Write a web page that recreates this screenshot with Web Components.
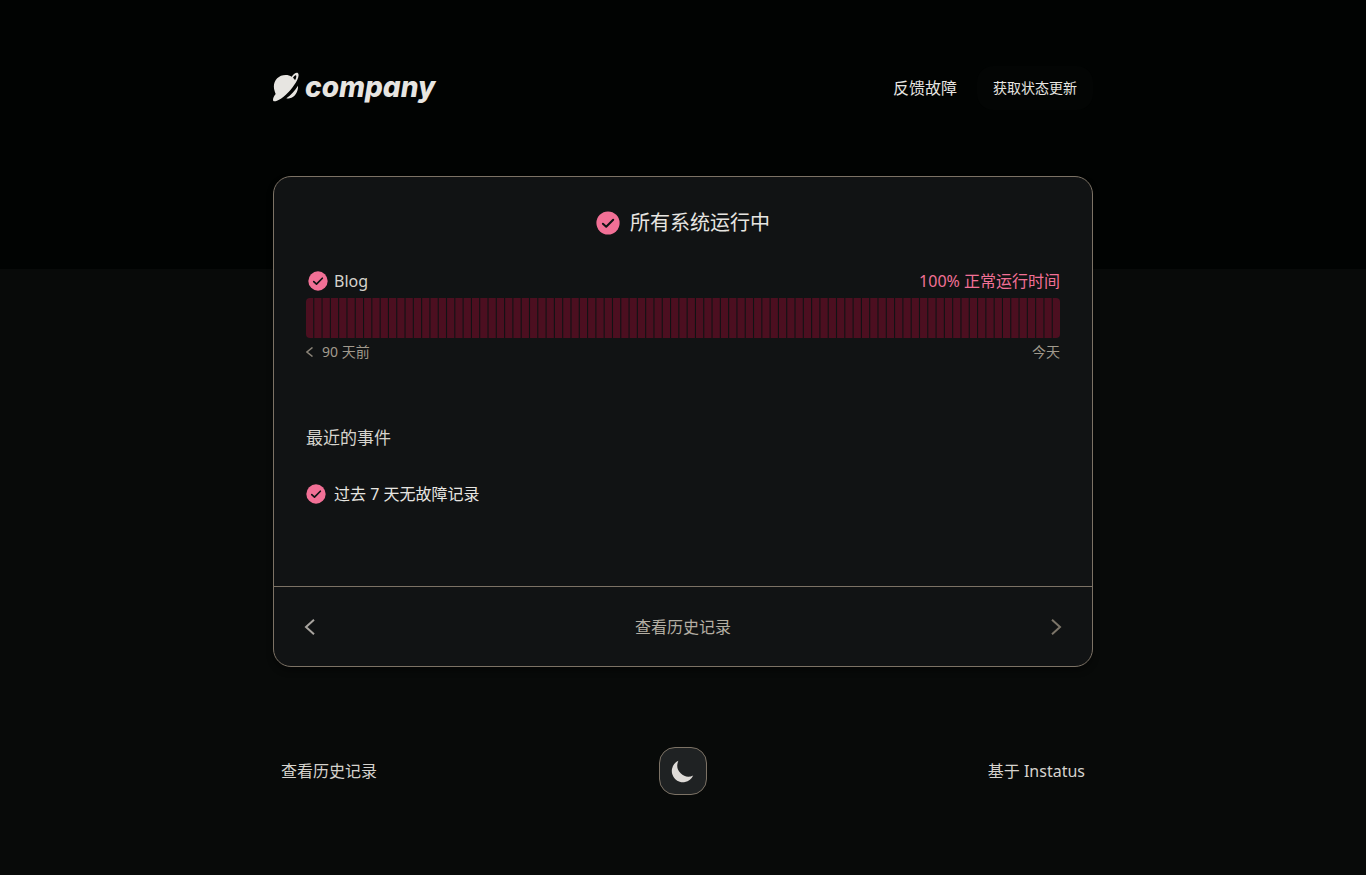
<!DOCTYPE html>
<html lang="zh-CN">
<head>
<meta charset="utf-8">
<meta name="viewport" content="width=device-width, initial-scale=1">
<title>company</title>
<style>
    :root {
        --page: #080a09;
        --page-top: #010302;
        --card: #111314;
        --line: #7c7265;
        --text: #e7e5e1;
        --soft: #d6d3cd;
        --muted: #a19a8d;
        --accent: #f27096;
        --bar: #4c0f20;
    }

    body {
        margin: 0;
        min-height: 100vh;
        background: linear-gradient(var(--page-top) 269px, var(--page) 269px);
        color: var(--text);
        font: 16px/24px "Noto Sans", "Noto Sans CJK SC", sans-serif;
    }
</style>
</head>
<body>
<status-page>
    <status-header slot="header"></status-header>
    <status-card>
        <status-title slot="title">所有系统运行中</status-title>
        <uptime-row name="Blog" days="90">100% 正常运行时间</uptime-row>
        <recent-events heading="最近的事件">过去 7 天无故障记录</recent-events>
        <history-nav slot="nav">查看历史记录</history-nav>
    </status-card>
    <status-footer slot="footer"></status-footer>
</status-page>

<script>
class StatusPage extends HTMLElement {
    connectedCallback() {
        this.attachShadow({ mode: 'open' });
        this.shadowRoot.innerHTML = `
            <style>
                :host {
                    display: block;
                    max-width: 820px;
                    margin: 0 auto;
                    padding: 66px 16px 80px;
                }

                main {
                    margin: 66px 0 80px;
                }
            </style>
            <slot name="header"></slot>
            <main><slot></slot></main>
            <slot name="footer"></slot>
        `;
    }
}

class CompanyLogo extends HTMLElement {
    connectedCallback() {
        this.attachShadow({ mode: 'open' });
        this.shadowRoot.innerHTML = `
            <style>
                :host {
                    display: block;
                }

                a {
                    display: flex;
                    align-items: center;
                    gap: 6px;
                    padding-bottom: 2px;
                    color: inherit;
                    text-decoration: none;
                    font: italic 800 28px/32px Inter, sans-serif;
                    font-feature-settings: "cv11";
                }

                svg {
                    width: 26px;
                    height: 30px;
                    fill: currentColor;
                }
            </style>
            <a href="#">
                <svg viewBox="0 0 78 90" aria-hidden="true">
                    <path d="M5 58C-4 31 13 9 38 9c7 0 13 2 18 5C63 5 71 0 75 4c5 6-1 21-12 36C50 60 28 81 12 86c-8 3-12 2-12-3 0-6 4-12 8-17-1-2-2-5-3-8z"/>
                    <path d="M60 17c3-5 7-8 9-7 2 2 1 9-3 15-1-3-3-6-6-8z" fill="#010302"/>
                    <path d="M75 41c1 18-9 34-25 38-4 1-7 1-10 0 14-10 25-22 35-38z"/>
                </svg>
                <span>company</span>
            </a>
        `;
    }
}

class StatusHeader extends HTMLElement {
    connectedCallback() {
        this.attachShadow({ mode: 'open' });
        this.shadowRoot.innerHTML = `
            <style>
                :host {
                    display: block;
                }

                header, nav {
                    display: flex;
                    align-items: center;
                    justify-content: space-between;
                }

                nav {
                    gap: 20px;
                }

                a {
                    color: inherit;
                    text-decoration: none;
                }

                button {
                    height: 44px;
                    padding: 0 16px;
                    border: 0;
                    border-radius: 16px;
                    background: #030504;
                    color: inherit;
                    font: inherit;
                    font-size: 14px;
                }
            </style>
            <header>
                <company-logo></company-logo>
                <nav>
                    <a href="#report">反馈故障</a>
                    <button type="button">获取状态更新</button>
                </nav>
            </header>
        `;
    }
}

class StatusCard extends HTMLElement {
    connectedCallback() {
        this.attachShadow({ mode: 'open' });
        this.shadowRoot.innerHTML = `
            <style>
                :host {
                    display: block;
                    border: 1px solid var(--line);
                    border-radius: 18px;
                    background: var(--card);
                    box-shadow: 0 4px 6px rgba(0, 0, 0, 0.4);
                }

                .content {
                    padding: 30px 32px 80px;
                }
            </style>
            <div class="content">
                <slot name="title"></slot>
                <slot></slot>
            </div>
            <slot name="nav"></slot>
        `;
    }
}

class CheckIcon extends HTMLElement {
    connectedCallback() {
        this.attachShadow({ mode: 'open' });
        this.shadowRoot.innerHTML = `
            <style>
                :host {
                    display: block;
                    width: 20px;
                    height: 20px;
                    flex: none;
                }

                svg {
                    display: block;
                    width: 100%;
                    height: 100%;
                }
            </style>
            <svg viewBox="0 0 24 24" fill="none" aria-hidden="true">
                <circle cx="12" cy="12" r="11.6" fill="var(--accent)"/>
                <path d="M6.9 12.7l3.3 3 7-7" stroke="var(--card)" stroke-width="2" stroke-linecap="round" stroke-linejoin="round"/>
            </svg>
        `;
    }
}

class StatusTitle extends HTMLElement {
    connectedCallback() {
        this.attachShadow({ mode: 'open' });
        this.shadowRoot.innerHTML = `
            <style>
                h1 {
                    display: flex;
                    align-items: center;
                    justify-content: center;
                    gap: 10px;
                    margin: 0;
                    font-size: 20px;
                    font-weight: 400;
                    line-height: 32px;
                }

                check-icon {
                    width: 24px;
                    height: 24px;
                }
            </style>
            <h1><check-icon></check-icon><slot></slot></h1>
        `;
    }
}

class UptimeRow extends HTMLElement {
    connectedCallback() {
        const days = Number(this.getAttribute('days'));
        // one bar per past day, plus today
        let bars = '';
        for (let i = 0; i <= days; i++) {
            bars += `<rect x="${i * 10}" width="8.7" height="40"/>`;
        }

        this.attachShadow({ mode: 'open' });
        this.shadowRoot.innerHTML = `
            <style>
                :host {
                    display: block;
                    margin-top: 30px;
                }

                .row, .name, .ago {
                    display: flex;
                    align-items: center;
                }

                .row {
                    justify-content: space-between;
                }

                .name {
                    gap: 6px;
                    padding-left: 2px;
                    color: var(--soft);
                }

                .uptime {
                    color: var(--accent);
                }

                .bars {
                    display: block;
                    width: 100%;
                    height: 40px;
                    margin: 5px 0 2px;
                    border-radius: 4px;
                    fill: var(--bar);
                }

                .range {
                    color: var(--muted);
                    font-size: 14px;
                }

                .ago {
                    gap: 8px;
                }

                .ago svg {
                    width: 8px;
                    height: 10px;
                    fill: none;
                    stroke: #8a8378;
                    stroke-width: 1.5;
                }
            </style>
            <div class="row">
                <div class="name"><check-icon></check-icon>${this.getAttribute('name')}</div>
                <div class="uptime"><slot></slot></div>
            </div>
            <svg class="bars" viewBox="0 0 ${days * 10 + 8.7} 40" preserveAspectRatio="none" aria-hidden="true">${bars}</svg>
            <div class="row range">
                <div class="ago">
                    <svg viewBox="0 0 8 10" aria-hidden="true"><path d="M6.5 .5L1 5l5.500 4.500"/></svg>
                    <span>${days} 天前</span>
                </div>
                <span>今天</span>
            </div>
        `;
    }
}

class RecentEvents extends HTMLElement {
    connectedCallback() {
        this.attachShadow({ mode: 'open' });
        this.shadowRoot.innerHTML = `
            <style>
                :host {
                    display: block;
                    margin-top: 62px;
                }

                h2 {
                    margin: 0 0 32px;
                    color: var(--soft);
                    font-size: 17px;
                    font-weight: 400;
                    line-height: 24px;
                }

                div {
                    display: flex;
                    align-items: center;
                    gap: 8px;
                }
            </style>
            <h2>${this.getAttribute('heading')}</h2>
            <div><check-icon></check-icon><span><slot></slot></span></div>
        `;
    }
}

class HistoryNav extends HTMLElement {
    connectedCallback() {
        this.attachShadow({ mode: 'open' });
        this.shadowRoot.innerHTML = `
            <style>
                :host {
                    display: block;
                    border-top: 1px solid var(--line);
                }

                nav {
                    display: flex;
                    align-items: center;
                    justify-content: space-between;
                    padding: 0 24px;
                    height: 79px;
                }

                a {
                    color: #b4aea3;
                    text-decoration: none;
                }

                button {
                    display: flex;
                    padding: 0;
                    border: 0;
                    background: none;
                    color: #a8a49f;
                }

                button:last-child {
                    color: #7c7569;
                }

                svg {
                    width: 24px;
                    height: 24px;
                    fill: none;
                    stroke: currentColor;
                    stroke-width: 2;
                }
            </style>
            <nav>
                <button type="button" aria-label="上一页">
                    <svg viewBox="0 0 24 24"><path d="M16 4.800L8 12l8 7.200"/></svg>
                </button>
                <a href="#history"><slot></slot></a>
                <button type="button" aria-label="下一页">
                    <svg viewBox="0 0 24 24"><path d="M8 4.800l8 7.200-8 7.200"/></svg>
                </button>
            </nav>
        `;
    }
}

class StatusFooter extends HTMLElement {
    connectedCallback() {
        this.attachShadow({ mode: 'open' });
        this.shadowRoot.innerHTML = `
            <style>
                :host {
                    display: block;
                    color: var(--soft);
                }

                footer {
                    display: grid;
                    grid-template-columns: 1fr auto 1fr;
                    align-items: center;
                    padding: 0 8px;
                }

                a {
                    justify-self: start;
                    color: inherit;
                    text-decoration: none;
                }

                a:last-child {
                    justify-self: end;
                }

                button {
                    display: flex;
                    align-items: center;
                    justify-content: center;
                    width: 48px;
                    height: 48px;
                    padding: 0;
                    border: 1px solid var(--line);
                    border-radius: 16px;
                    background: #1f2223;
                    color: #dedbd7;
                }

                svg {
                    width: 28px;
                    height: 28px;
                    fill: currentColor;
                }
            </style>
            <footer>
                <a href="#history">查看历史记录</a>
                <button type="button" aria-label="切换主题">
                    <svg viewBox="0 0 20 20"><path d="M17.293 13.293A8 8 0 016.707 2.707a8.001 8.001 0 1010.586 10.586z"/></svg>
                </button>
                <a href="#instatus">基于 Instatus</a>
            </footer>
        `;
    }
}

customElements.define('check-icon', CheckIcon);
customElements.define('company-logo', CompanyLogo);
customElements.define('status-page', StatusPage);
customElements.define('status-header', StatusHeader);
customElements.define('status-card', StatusCard);
customElements.define('status-title', StatusTitle);
customElements.define('uptime-row', UptimeRow);
customElements.define('recent-events', RecentEvents);
customElements.define('history-nav', HistoryNav);
customElements.define('status-footer', StatusFooter);
</script>
</body>
</html>
